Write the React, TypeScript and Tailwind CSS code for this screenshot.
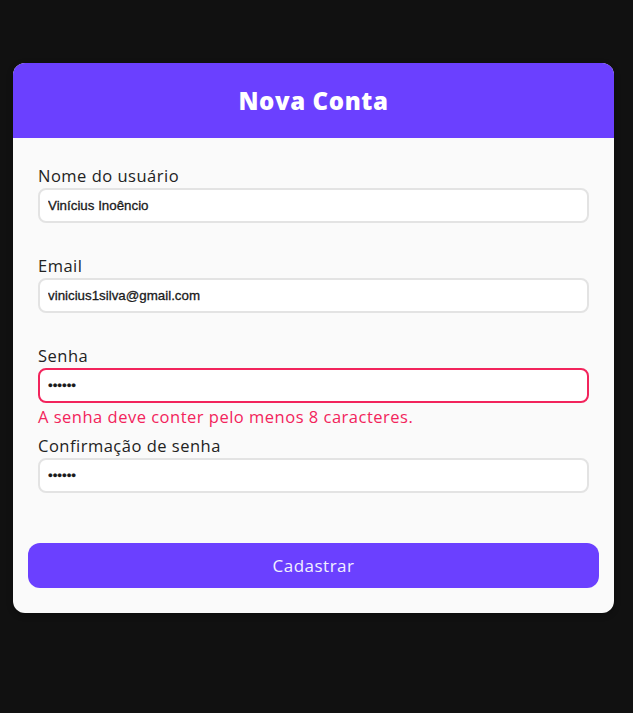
import React from "react";

const font = { fontFamily: '"Open Sans", "Liberation Sans", sans-serif' };

function Field({
  label,
  type = "text",
  value,
  error,
  last,
}: {
  label: string;
  type?: string;
  value: string;
  error?: string;
  last?: boolean;
}) {
  return (
    <div className={error ? "mb-[5px]" : last ? "" : "mb-[31px]"}>
      <label className="block text-[16.5px] leading-[24px] tracking-[0.5px] text-[#222]">{label}</label>
      <input
        type={type}
        defaultValue={value}
        className={`block w-full h-[35px] rounded-[8px] border-2 bg-white px-[8px] text-[13.333px] text-[#1a1a1a] outline-none [-webkit-text-stroke:0.3px_#1a1a1a] ${
          error ? "border-[#f2245c]" : "border-[#e3e3e3]"
        }`}
        style={{ fontFamily: '"Liberation Sans", Arial, sans-serif' }}
      />
      {error && (
        <p className="mt-[2px] text-[16.5px] leading-[24px] tracking-[0.5px] text-[#f2245c]">{error}</p>
      )}
    </div>
  );
}

export default function App() {
  return (
    <div className="min-h-screen bg-[#111111] pt-[63px] pl-[13px]" style={font}>
      <div className="w-[601px] overflow-hidden rounded-[12px] bg-[#fafafa] shadow-[0_2px_6px_rgba(0,0,0,0.3)]">
        <div className="flex h-[75px] items-center justify-center bg-[#6b40ff]">
          <h1 className="text-[24px] font-extrabold tracking-[0.6px] text-white">Nova Conta</h1>
        </div>
        <form className="px-[15px] pt-[26px] pb-[25px]" onSubmit={(e) => e.preventDefault()}>
          <div className="px-[10px]">
            <Field label="Nome do usuário" value="Vinícius Inoêncio" />
            <Field label="Email" value="vinicius1silva@gmail.com" />
            <Field
              label="Senha"
              type="password"
              value="123456"
              error="A senha deve conter pelo menos 8 caracteres."
            />
            <Field label="Confirmação de senha" type="password" value="123456" last />
          </div>
          <button
            type="submit"
            className="mt-[50px] flex h-[45px] w-full items-center justify-center rounded-[12px] bg-[#6b40ff] text-[17px] tracking-[0.5px] text-[#f2f0ff]"
          >
            Cadastrar
          </button>
        </form>
      </div>
    </div>
  );
}
